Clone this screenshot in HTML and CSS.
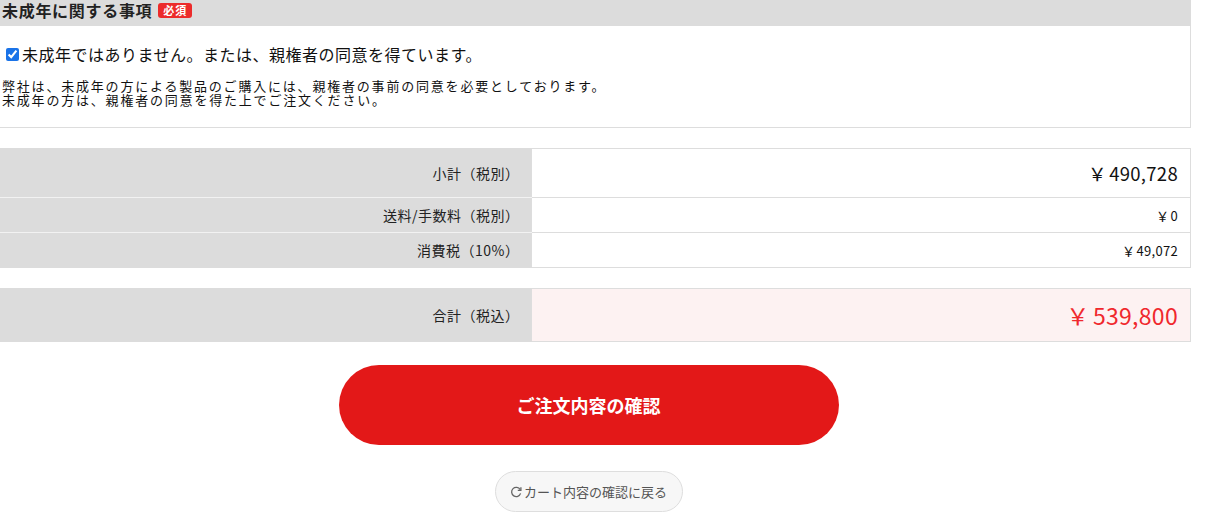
FILE: index.html
```html
<!DOCTYPE html>
<html lang="ja">
<head>
<meta charset="utf-8">
<link rel="stylesheet" href="styles.css">
</head>
<body>
<div class="page">
  <section class="minor">
    <h2 class="minor-head">未成年に関する事項<span class="badge">必須</span></h2>
    <div class="minor-body">
      <label class="agree"><input type="checkbox" checked class="chk">未成年ではありません。または、親権者の同意を得ています。</label>
      <p class="notice">弊社は、未成年の方による製品のご購入には、親権者の事前の同意を必要としております。<br>未成年の方は、親権者の同意を得た上でご注文ください。</p>
    </div>
  </section>

  <table class="sum">
    <tr class="r-main"><th>小計（税別）</th><td class="v-big">￥ 490,728</td></tr>
    <tr class="r-sub"><th>送料/手数料（税別）</th><td>￥ 0</td></tr>
    <tr class="r-sub"><th>消費税（10%）</th><td>￥ 49,072</td></tr>
  </table>

  <table class="sum total">
    <tr><th>合計（税込）</th><td>￥ 539,800</td></tr>
  </table>

  <div class="actions">
    <button class="btn-confirm">ご注文内容の確認</button>
    <button class="btn-back"><svg class="ico" viewBox="0 0 12 12" width="12" height="12"><path d="M10.2 3.6A4.6 4.6 0 1 0 10.6 7.4" fill="none" stroke="#666" stroke-width="1.3"/><path d="M10.9 1.2v3.1H7.8" fill="none" stroke="#666" stroke-width="1.3"/></svg>カート内容の確認に戻る</button>
  </div>
</div>
</body>
</html>
```
FILE: styles.css
```css
* { box-sizing: border-box; }
body {
  margin: 0;
  background: #fff;
  font-family: "Noto Sans CJK JP", "Noto Sans", sans-serif;
  color: #222;
}
.page { width: 1191px; }

.minor-head {
  margin: 0;
  height: 26px;
  background: #dcdcdc;
  font-size: 16px;
  font-weight: bold;
  letter-spacing: 0.7px;
  line-height: 20px;
  padding: 0 0 0 2px;
  display: flex;
  align-items: flex-start;
  color: #222;
}
.badge {
  display: inline-block;
  margin-left: 6px;
  margin-top: 3px;
  background: #ec2b2b;
  color: #fff;
  font-size: 11px;
  line-height: 15px;
  height: 15px;
  padding: 0 5px;
  border-radius: 3px;
  letter-spacing: 1px;
}
.minor-body {
  border: 1px solid #ddd;
  border-top: none;
  border-left: none;
  height: 102px;
  padding: 18px 0 0 0;
}
.agree {
  display: flex;
  align-items: center;
  font-size: 16px;
  letter-spacing: 0.5px;
  line-height: 20px;
  color: #111;
}
.chk {
  width: 13px;
  height: 13px;
  margin: 0 3px 0 6px;
  accent-color: #1a73e8;
}
.notice {
  margin: 15px 0 0 2px;
  font-size: 13px;
  line-height: 14px;
  letter-spacing: 1.8px;
  color: #111;
}

.sum {
  width: 1191px;
  border-collapse: collapse;
  margin-top: 20px;
  table-layout: fixed;
}
.sum th {
  width: 531px;
  background: #dcdcdc;
  font-weight: normal;
  text-align: right;
  font-size: 14px;
  letter-spacing: 0.5px;
  padding: 0 11px 0 0;
  border-top: 1px solid #f2f2f2;
  border-bottom: 1px solid #f2f2f2;
  color: #222;
}
.sum td {
  text-align: right;
  padding: 0 12px 0 0;
  border: 1px solid #ddd;
  font-size: 13px;
  letter-spacing: 0.3px;
  color: #111;
  word-spacing: -2px;
}
.sum tr:first-child th { border-top-color: #dcdcdc; }
.sum tr:last-child th { border-bottom-color: #dcdcdc; }
.r-main th, .r-main td { height: 49px; }
.r-sub th, .r-sub td { height: 35px; }
.sum td.v-big { font-size: 18.5px; }

.total th, .total td { height: 53px; }
.total td {
  background: #fdf2f2;
  color: #f0282d;
  font-size: 23px;
}

.actions {
  width: 1177px;
  display: flex;
  flex-direction: column;
  align-items: center;
  padding-top: 23px;
}
.btn-confirm {
  width: 500px;
  height: 80px;
  border: none;
  border-radius: 40px;
  background: #e31818;
  color: #fff;
  font-family: inherit;
  font-size: 18px;
  font-weight: bold;
  cursor: pointer;
}
.btn-back {
  margin-top: 26px;
  width: 188px;
  height: 41px;
  border: 1px solid #dedede;
  border-radius: 21px;
  background: #f7f7f7;
  color: #555;
  font-family: inherit;
  font-size: 13px;
  display: flex;
  align-items: center;
  justify-content: center;
  padding: 0;
}
.ico { margin-right: 2px; }
```
